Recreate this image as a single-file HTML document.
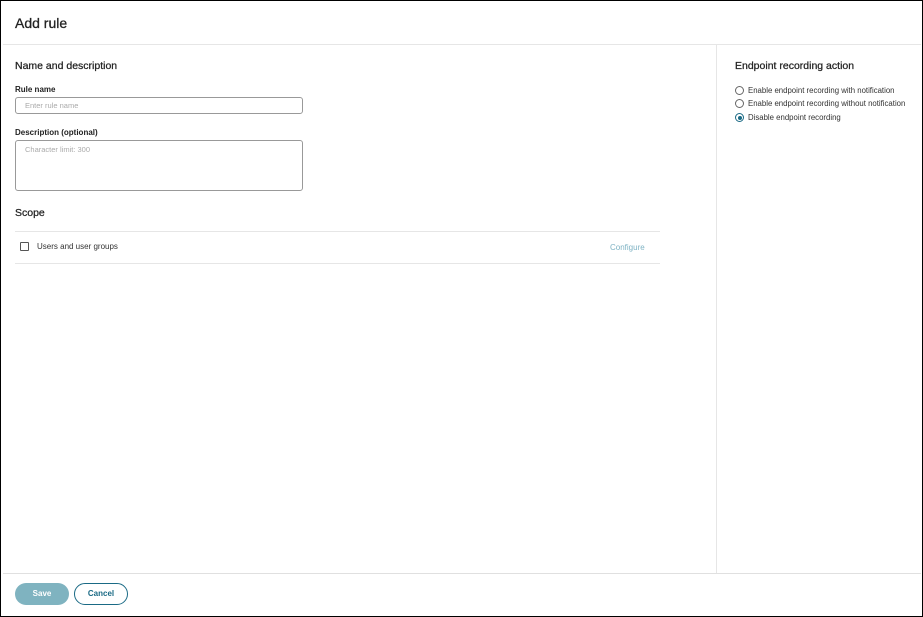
<!DOCTYPE html>
<html><head><style>
*{box-sizing:border-box;margin:0;padding:0}
body{width:923px;height:617px;font-family:"Liberation Sans",sans-serif;color:#222;background:#fff;position:relative;overflow:hidden}
.frame{position:absolute;left:0;top:0;width:923px;height:617px;border:1px solid #000}
.a{position:absolute;white-space:nowrap}
.lbl{font-size:8px;font-weight:bold;color:#222}
.inp{position:absolute;border:1px solid #999;border-radius:3px;background:#fff;font-size:7.5px;color:#aaa;padding-left:9px}
.radio{position:absolute;width:9px;height:9px;border:1px solid #666;border-radius:50%}
.rt{font-size:7.8px;color:#333}
.hd{font-size:10.5px;color:#222;-webkit-text-stroke:0.25px #222}
</style></head><body>
<div class="frame"></div>
<div class="a" style="left:15px;top:15px;font-size:14px;color:#222;-webkit-text-stroke:0.3px #222">Add rule</div>
<div class="a" style="left:3px;top:44px;width:918px;height:1px;background:#e6e6e6"></div>
<div class="a" style="left:716px;top:45px;width:1px;height:528px;background:#e6e6e6"></div>
<div class="a" style="left:3px;top:573px;width:918px;height:1px;background:#e0e0e0"></div>

<div class="a hd" style="left:15px;top:60px">Name and description</div>
<div class="a lbl" style="left:15px;top:85px">Rule name</div>
<div class="inp" style="left:15px;top:97px;width:288px;height:17px;line-height:15px">Enter rule name</div>
<div class="a lbl" style="left:15px;top:128px">Description (optional)</div>
<div class="inp" style="left:15px;top:140px;width:288px;height:51px;line-height:18px">Character limit: 300</div>

<div class="a hd" style="left:15px;top:207px">Scope</div>
<div class="a" style="left:15px;top:231px;width:645px;height:1px;background:#e6e6e6"></div>
<div class="a" style="left:20px;top:242px;width:9px;height:9px;border:1px solid #555;border-radius:1px"></div>
<div class="a" style="left:37px;top:242px;font-size:8px;color:#333">Users and user groups</div>
<div class="a" style="left:610px;top:243px;font-size:8px;color:#7fb3c4">Configure</div>
<div class="a" style="left:15px;top:263px;width:645px;height:1px;background:#e6e6e6"></div>

<div class="a hd" style="left:735px;top:60px">Endpoint recording action</div>
<div class="radio" style="left:735px;top:86px"></div>
<div class="a rt" style="left:748px;top:86px">Enable endpoint recording with notification</div>
<div class="radio" style="left:735px;top:99px"></div>
<div class="a rt" style="left:748px;top:99px">Enable endpoint recording without notification</div>
<div class="radio" style="left:735px;top:113px;border-color:#1a6a85"><div style="position:absolute;left:1.5px;top:1.5px;width:4px;height:4px;border-radius:50%;background:#1a6a85"></div></div>
<div class="a rt" style="left:748px;top:113px">Disable endpoint recording</div>

<div class="a" style="left:15px;top:583px;width:54px;height:22px;border-radius:11px;background:#7fb3c0;color:#fff;font-size:8px;font-weight:bold;text-align:center;line-height:22px">Save</div>
<div class="a" style="left:74px;top:583px;width:54px;height:22px;border-radius:11px;border:1.5px solid #1a6a85;color:#1a6a85;font-size:8px;font-weight:bold;text-align:center;line-height:19px">Cancel</div>
</body></html>
